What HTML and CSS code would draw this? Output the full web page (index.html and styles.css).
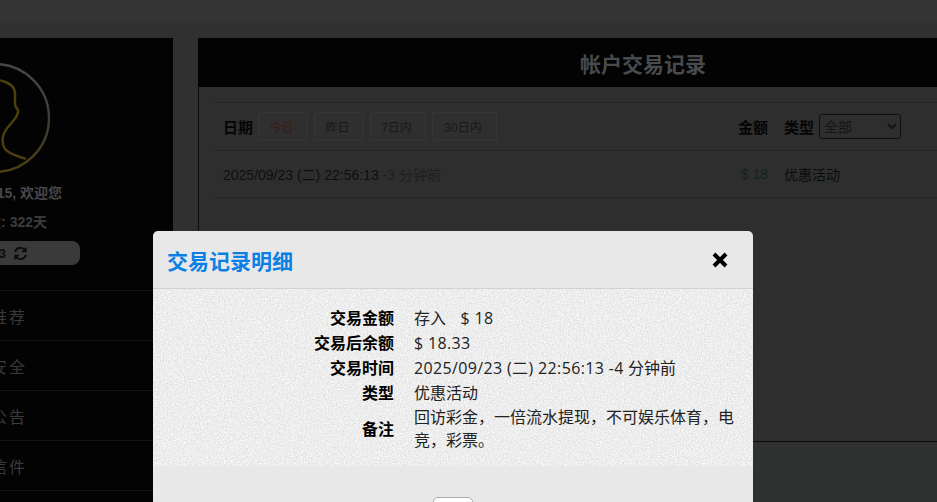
FILE: index.html
```html
<!DOCTYPE html>
<html lang="zh-CN">
<head>
<meta charset="utf-8">
<title>帐户交易记录</title>
<link rel="stylesheet" href="styles.css">
</head>
<body>
<div class="page">
  <header class="topbar"></header>
  <div class="layout">
    <aside class="sidebar">
      <svg class="avatar" viewBox="-58 -58 116 116" width="116" height="116" aria-hidden="true">
        <defs>
          <linearGradient id="ring" gradientUnits="userSpaceOnUse" x1="0" y1="-58" x2="0" y2="58">
            <stop offset="0" stop-color="#474747"/>
            <stop offset="0.55" stop-color="#3e3d33"/>
            <stop offset="1" stop-color="#4e3f0e"/>
          </linearGradient>
        </defs>
        <circle cx="0" cy="0" r="54" fill="none" stroke="url(#ring)" stroke-width="2.4"/>
        <g transform="translate(5,-118)">
          <path d="M-20 80C0 78 13 82 15 92L15 104Q15 106 18 110C19 116 12 122 8 127C2 134 1 143 5 149C10 155 18 156 26 159" fill="none" stroke="url(#ring)" stroke-width="2.4"/>
        </g>
      </svg>
      <p class="greet">a000015, 欢迎您</p>
      <p class="days">注册天数: 322天</p>
      <div class="balance">
        <span class="balance-num">18.33</span>
        <svg class="sync" viewBox="0 0 16 16" width="15" height="15" aria-hidden="true">
          <path d="M2.2 6.4A6 6 0 0 1 12.6 4.2" fill="none" stroke="#0c0c0c" stroke-width="2"/>
          <path d="M14.6 0.8V6.6H8.8Z" fill="#0c0c0c"/>
          <path d="M13.8 9.6A6 6 0 0 1 3.4 11.8" fill="none" stroke="#0c0c0c" stroke-width="2"/>
          <path d="M1.4 15.2V9.4H7.2Z" fill="#0c0c0c"/>
        </svg>
      </div>
      <nav class="menu">
        <a class="menu-item">好友推荐</a>
        <a class="menu-item">账号安全</a>
        <a class="menu-item">最新公告</a>
        <a class="menu-item">站内信件</a>
      </nav>
    </aside>
    <main class="main">
      <h1 class="main-title">帐户交易记录</h1>
      <section class="panel">
        <div class="table">
          <div class="row row-head">
            <div class="date-filter">
              <strong class="col-label">日期</strong>
              <button class="chip chip-active">今日</button>
              <button class="chip">昨日</button>
              <button class="chip chip-week">7日内</button>
              <button class="chip chip-month">30日内</button>
            </div>
            <strong class="col-label col-amount">金额</strong>
            <div class="type-filter">
              <strong class="col-label">类型</strong>
              <select class="type-select"><option>全部</option></select>
            </div>
          </div>
          <div class="row">
            <div class="when">2025/09/23 (二) 22:56:13 <span class="ago">-3 分钟前</span></div>
            <div class="amount">$ 18</div>
            <div class="type">优惠活动</div>
          </div>
        </div>
      </section>
    </main>
  </div>

  <div class="modal">
    <div class="modal-head">
      <h2 class="modal-title">交易记录明细</h2>
      <svg class="modal-close" viewBox="0 0 16 16" width="16" height="16" aria-label="关闭">
        <path d="M2 2L14 14M14 2L2 14" fill="none" stroke="#000" stroke-width="4"/>
      </svg>
    </div>
    <div class="modal-body">
      <svg class="noise" aria-hidden="true" width="100%" height="100%">
        <filter id="grain" x="0" y="0" width="100%" height="100%" color-interpolation-filters="sRGB">
          <feTurbulence type="fractalNoise" baseFrequency="0.7" numOctaves="2" seed="4"/>
          <feColorMatrix type="matrix" values="0.2 0 0 0 0.83  0.2 0 0 0 0.83  0.2 0 0 0 0.83  0 0 0 0 1"/>
        </filter>
        <rect width="100%" height="100%" filter="url(#grain)"/>
      </svg>
      <dl class="details">
        <dt>交易金额</dt><dd>存入 &nbsp; <span class="latin latin-amount">$ 18</span></dd>
        <dt>交易后余额</dt><dd><span class="latin">$ 18.33</span></dd>
        <dt>交易时间</dt><dd><span class="latin">2025/09/23 (二) 22:56:13 -4</span> 分钟前</dd>
        <dt>类型</dt><dd>优惠活动</dd>
        <dt>备注</dt><dd>回访彩金，一倍流水提现，不可娱乐体育，电竞，彩票。</dd>
      </dl>
    </div>
    <div class="modal-foot">
      <button class="modal-ok">确定</button>
    </div>
  </div>
</div>
</body>
</html>
```

FILE: styles.css
```css
* { box-sizing: border-box; }
html, body { margin: 0; height: 100%; }
body {
  background: #303231;
  font-family: "Liberation Sans", "Noto Sans CJK SC", sans-serif;
  overflow: hidden;
}
.page { position: relative; width: 937px; height: 502px; overflow: hidden; }
.topbar { height: 23px; background: #343434; }
.layout { display: flex; gap: 25px; padding-top: 15px; margin-left: -183px; height: 479px; background: linear-gradient(#303030, #303030 419px, #303231 419px); }

/* sidebar */
.sidebar { flex: 0 0 356px; background: #030303; padding-top: 22px; }
.avatar { display: block; margin: 0 auto; }
.greet, .days { margin: 0; font-size: 14px; font-weight: 700; line-height: 16px; text-align: right; }
.greet { color: #484848; padding-right: 111px; margin-top: 9px; }
.days { color: #3c3c3c; padding-right: 126px; margin-top: 13px; }
.balance { display: flex; align-items: center; justify-content: flex-end; gap: 7px; width: 263px; height: 24px; margin: 11px 0 0 0; padding-right: 52px; background: #3a3a3a; border-radius: 8px; }
.balance-num { font-size: 13px; font-weight: 700; color: #0c0c0c; }
.sync { display: block; }
.menu { margin-top: 25px; border-top: 1px solid #141414; }
.menu-item { display: block; height: 50px; line-height: 54px; border-bottom: 1px solid #141414; padding-right: 146px; text-align: right; font-size: 16px; letter-spacing: 2px; color: #3a3a3a; }

/* main */
.main { flex: 0 0 890px; }
.main-title { margin: 0; height: 49px; background: #030303; color: #474b4e; font-size: 21px; font-weight: 700; line-height: 53px; text-align: center; }
.panel { height: 355px; background: #2e2e2e; border-left: 1px solid #0c0c0c; border-bottom: 1px solid #0a0a0a; padding: 15px 0 0 15px; }
.table { border-top: 1px solid #262626; }
.row { display: grid; grid-template-columns: 515px 46px 1fr; align-items: center; height: 47px; padding-left: 9px; border-bottom: 1px solid #262626; font-size: 14px; color: #0c0c0c; }
.row-head { height: 48px; }
.date-filter { display: flex; align-items: center; gap: 6px; }
.col-label { font-size: 15px; font-weight: 700; color: #050505; }
.chip { height: 29px; width: 50px; margin: 0; padding: 0 3px 0 0; background: #2f2f2f; border: 1px solid #363636; border-radius: 2px; font: 12px "Liberation Sans", "Noto Sans CJK SC", sans-serif; color: #181818; }
.date-filter .col-label { margin-right: -1px; }
.chip-active { color: #3e1a14; }
.chip-week { width: 56px; }
.chip-month { width: 65px; }
.col-amount { justify-self: start; }
.type-filter { display: flex; align-items: center; gap: 5px; }
.type-select { width: 82px; height: 25px; background: #2e2e2e; border: 1px solid #0e0e0e; border-radius: 3px; font: 14px "Liberation Sans", "Noto Sans CJK SC", sans-serif; color: #141414; }
.when { color: #0e0e0e; }
.ago { color: #1e1e1e; }
.amount { grid-column: 2; color: #14221d; justify-self: end; padding-right: 16px; }
.type { color: #0c0c0c; }

/* modal */
.modal { position: absolute; left: 153px; top: 231px; width: 600px; height: 300px; background: #e8e8e8; border-radius: 5px 5px 0 0; }
.modal-head { display: flex; align-items: center; justify-content: space-between; height: 58px; padding: 0 25px 0 14px; border-bottom: 1px solid #d2d2d2; }
.modal-title { margin: 0; font-size: 21px; font-weight: 700; color: #0a80e6; }
.modal-close { display: block; }
.modal-body { position: relative; height: 177px; padding: 17px 18px 0 0; overflow: hidden; }
.noise { position: absolute; inset: 0; }
.details { position: relative; display: grid; grid-template-columns: 241px 1fr; column-gap: 20px; align-items: center; margin: 0; font-size: 16px; line-height: 25px; color: #222; font-family: "Open Sans", "Noto Sans CJK SC", sans-serif; }
.details dt { font-weight: 700; text-align: right; color: #000; }
.details dd { margin: 0; }
.details dd:last-child { line-height: 23px; }
.latin { letter-spacing: 0.36px; }
.latin-amount { margin-left: 2px; }
.modal-foot { display: flex; justify-content: center; padding-top: 31px; }
.modal-ok { width: 40px; height: 34px; padding: 0; background: #fff; border: 1px solid #aaa; border-radius: 5px; font: 14px "Noto Sans CJK SC", sans-serif; color: #fff; }
```
